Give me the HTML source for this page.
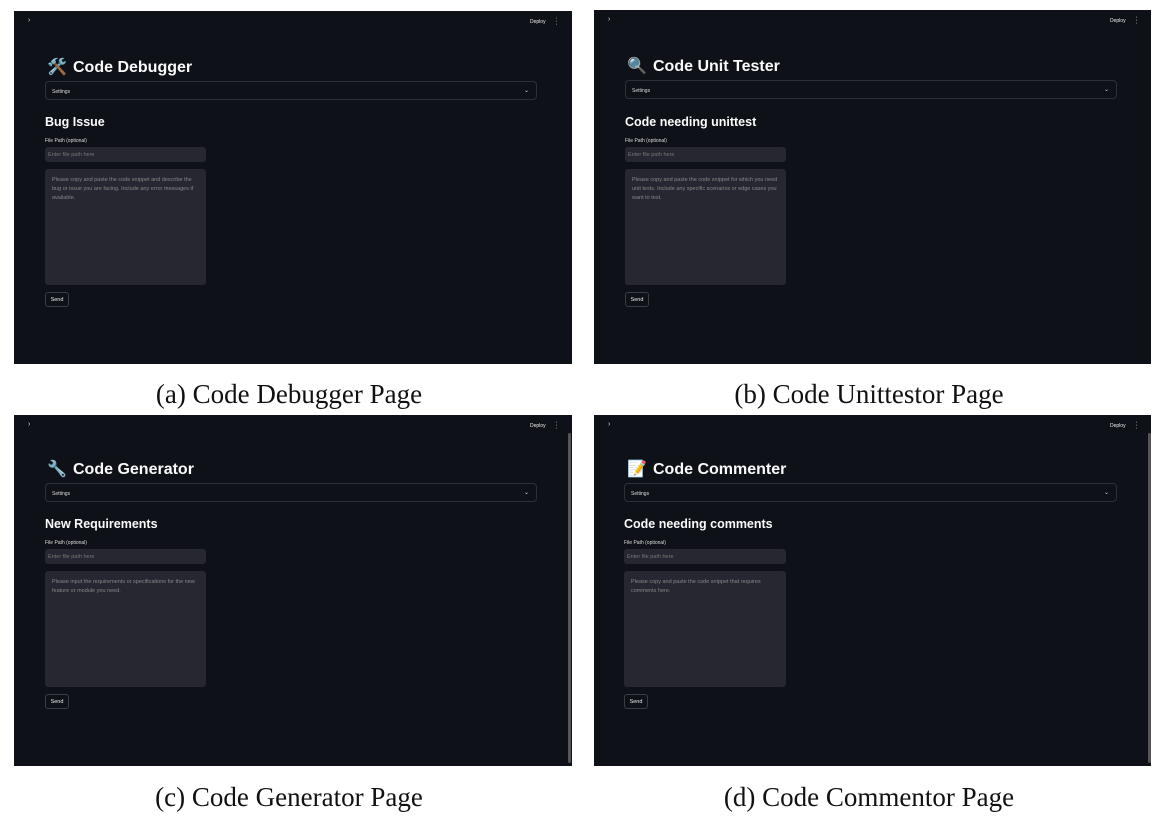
<!DOCTYPE html>
<html><head><meta charset="utf-8"><style>
*{margin:0;padding:0;box-sizing:border-box}
body{width:1162px;height:818px;background:#fff;position:relative;overflow:hidden;font-family:"Liberation Sans","DejaVu Sans",sans-serif}
.p{position:absolute;width:558px;height:353px;background:#0e1117;color:#fafafa;overflow:hidden}
.p *{position:absolute}
.arrow{left:14px;top:6px;font-size:7px;color:#ddd}
.dep{left:516px;top:8px;font-size:5px;color:#eee}
.dots{left:541px;top:6px;font-size:7px;color:#ddd;line-height:3px;width:3px;text-align:center}
.ttl{left:33px;top:46px;font-size:16px;font-weight:bold;white-space:nowrap}
.ttl span{position:static;display:inline-block;width:26px}
.set{left:31px;top:70px;width:492px;height:19px;border:1px solid #2e3038;border-radius:4px}
.set i{left:6px;top:7px;font-size:5px;font-style:normal;color:#ddd}
.set b{right:7px;top:5px;font-size:6px;color:#ddd;font-weight:normal}
.sub{left:31px;top:104px;font-size:12.5px;font-weight:bold;white-space:nowrap}
.lab{left:31px;top:127px;font-size:5px;color:#ddd}
.inp{left:31px;top:136px;width:161px;height:15px;background:#262730;border-radius:3px;font-size:5.5px;color:#777;padding:5px 3px}
.ta{left:31px;top:158px;width:161px;height:116px;background:#262730;border-radius:3px;font-size:5.5px;color:#888;padding:7px 7px;line-height:9px}
.btn{left:31px;top:281px;width:24px;height:15px;border:1px solid #3a3c46;border-radius:3px;font-size:5.5px;text-align:center;line-height:14px;color:#eee}
.sb{left:554px;top:18px;width:3px;height:330px;background:#555;border-radius:2px}
.cap{position:absolute;font-family:"Liberation Serif",serif;font-size:27px;color:#111;text-align:center;width:560px;white-space:nowrap}
</style></head><body>

<div class="p" style="left:14px;top:11px">
<div class="arrow">›</div><div class="dep">Deploy</div><div class="dots">·<br>·<br>·</div>
<div class="ttl"><span>🛠️</span>Code Debugger</div>
<div class="set"><i>Settings</i><b>⌄</b></div>
<div class="sub">Bug Issue</div>
<div class="lab">File Path (optional)</div>
<div class="inp">Enter file path here</div>
<div class="ta">Please copy and paste the code snippet and describe the bug or issue you are facing. Include any error messages if available.</div>
<div class="btn">Send</div>
</div>

<div class="p" style="left:594px;top:10px;width:557px;height:354px">
<div class="arrow">›</div><div class="dep">Deploy</div><div class="dots">·<br>·<br>·</div>
<div class="ttl"><span>🔍</span>Code Unit Tester</div>
<div class="set"><i>Settings</i><b>⌄</b></div>
<div class="sub" style="top:105px">Code needing unittest</div>
<div class="lab" style="top:128px">File Path (optional)</div>
<div class="inp" style="top:137px">Enter file path here</div>
<div class="ta" style="top:159px">Please copy and paste the code snippet for which you need unit tests. Include any specific scenarios or edge cases you want to test.</div>
<div class="btn" style="top:282px">Send</div>
</div>

<div class="p" style="left:14px;top:415px;height:351px">
<div class="arrow">›</div><div class="dep">Deploy</div><div class="dots">·<br>·<br>·</div>
<div class="ttl" style="top:44px"><span>🔧</span>Code Generator</div>
<div class="set" style="top:68px"><i>Settings</i><b>⌄</b></div>
<div class="sub" style="top:102px">New Requirements</div>
<div class="lab" style="top:125px">File Path (optional)</div>
<div class="inp" style="top:134px">Enter file path here</div>
<div class="ta" style="top:156px">Please input the requirements or specifications for the new feature or module you need.</div>
<div class="btn" style="top:279px">Send</div>
<div class="sb"></div>
</div>

<div class="p" style="left:594px;top:415px;width:557px;height:351px">
<div class="arrow">›</div><div class="dep">Deploy</div><div class="dots">·<br>·<br>·</div>
<div class="ttl" style="top:44px"><span>📝</span>Code Commenter</div>
<div class="set" style="top:68px;left:30px;width:493px"><i>Settings</i><b>⌄</b></div>
<div class="sub" style="top:102px;left:30px">Code needing comments</div>
<div class="lab" style="top:125px;left:30px">File Path (optional)</div>
<div class="inp" style="top:134px;left:30px;width:162px">Enter file path here</div>
<div class="ta" style="top:156px;left:30px;width:162px">Please copy and paste the code snippet that requires comments here.</div>
<div class="btn" style="top:279px;left:30px">Send</div>
<div class="sb"></div>
</div>

<div class="cap" style="left:9px;top:379px">(a) Code Debugger Page</div>
<div class="cap" style="left:589px;top:379px">(b) Code Unittestor Page</div>
<div class="cap" style="left:9px;top:782px">(c) Code Generator Page</div>
<div class="cap" style="left:589px;top:782px">(d) Code Commentor Page</div>
</body></html>
